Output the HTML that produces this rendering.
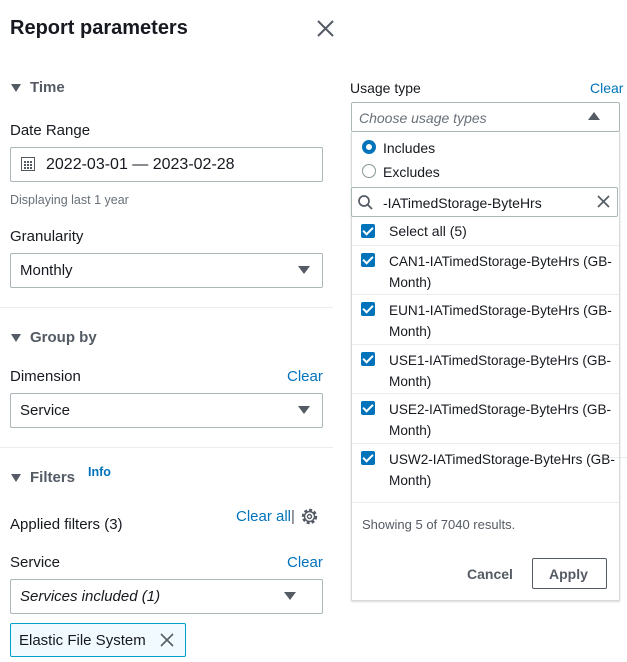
<!DOCTYPE html>
<html><head><meta charset="utf-8"><style>
*{box-sizing:border-box;margin:0;padding:0}
body{width:627px;height:662px;background:#fff;font-family:"Liberation Sans",Arial,sans-serif;color:#16191f;position:relative;overflow:hidden;font-size:15px}
.a{position:absolute;white-space:nowrap}
.h{font-weight:bold;color:#545b64;font-size:15px;padding-left:20px}
.h:before{content:"";position:absolute;left:1px;top:5px;border-left:5px solid transparent;border-right:5px solid transparent;border-top:8px solid #545b64}
.blue{color:#0073bb}
.box{position:absolute;border:1px solid #aab7b8;border-radius:2px;background:#fff}
.tri{position:absolute;width:0;height:0;border-left:6px solid transparent;border-right:6px solid transparent;border-top:8px solid #545b64}
.hr{position:absolute;height:1px;background:#eaeded}
.cb{position:absolute;width:14px;height:14px;background:#0073bb;border-radius:2px}
.cb:after{content:"";position:absolute;left:4px;top:1px;width:4px;height:8px;border:solid #fff;border-width:0 2px 2px 0;transform:rotate(45deg)}
.it{position:absolute;white-space:nowrap;font-size:13.6px;line-height:21px}
</style></head><body>
<div class="a" style="left:10px;top:17px;font-size:20px;font-weight:bold">Report parameters</div>
<svg class="a" style="left:317px;top:20px" width="17" height="17"><path d="M1 1L16 16M16 1L1 16" stroke="#545b64" stroke-width="2"/></svg>

<div class="a h" style="left:10px;top:79px">Time</div>
<div class="a" style="left:10px;top:122px">Date Range</div>
<div class="box" style="left:10px;top:147px;width:313px;height:35px"></div>
<svg class="a" style="left:21px;top:157px" width="14" height="14"><rect x="0.5" y="0.5" width="13" height="13" fill="none" stroke="#545b64"/><path d="M3 4h2v2H3zM6 4h2v2H6zM9 4h2v2H9zM3 7h2v2H3zM6 7h2v2H6zM9 7h2v2H9zM3 10h2v2H3zM6 10h2v2H6zM9 10h2v2H9z" fill="#545b64"/></svg>
<div class="a" style="left:46px;top:156px;font-size:16px">2022-03-01 — 2023-02-28</div>
<div class="a" style="left:10px;top:193px;font-size:12.5px;color:#687078">Displaying last 1 year</div>
<div class="a" style="left:10px;top:228px">Granularity</div>
<div class="box" style="left:10px;top:253px;width:313px;height:35px"></div>
<div class="a" style="left:20px;top:262px">Monthly</div>
<div class="tri" style="left:298px;top:266px"></div>
<div class="hr" style="left:0;top:307px;width:333px"></div>

<div class="a h" style="left:10px;top:329px">Group by</div>
<div class="a" style="left:10px;top:368px">Dimension</div>
<div class="a blue" style="left:287px;top:368px">Clear</div>
<div class="box" style="left:10px;top:393px;width:313px;height:35px"></div>
<div class="a" style="left:20px;top:402px">Service</div>
<div class="tri" style="left:298px;top:406px"></div>
<div class="hr" style="left:0;top:447px;width:333px"></div>
<div class="hr" style="left:600px;top:457px;width:27px"></div>

<div class="a h" style="left:10px;top:469px">Filters</div>
<div class="a blue" style="left:88px;top:465px;font-size:12.5px;font-weight:bold">Info</div>
<div class="a" style="left:10px;top:516px">Applied filters (3)</div>
<div class="a blue" style="left:236px;top:508px">Clear all<span style="color:#545b64">|</span></div>
<svg class="a" style="left:300px;top:507px" width="19" height="19" viewBox="0 0 19 19"><circle cx="9.5" cy="9.5" r="6.5" fill="none" stroke="#545b64" stroke-width="2.4" stroke-dasharray="3 2"/><circle cx="9.5" cy="9.5" r="5" fill="none" stroke="#545b64" stroke-width="1.4"/><circle cx="9.5" cy="9.5" r="2" fill="none" stroke="#545b64" stroke-width="1.4"/></svg>
<div class="a" style="left:10px;top:554px">Service</div>
<div class="a blue" style="left:287px;top:554px">Clear</div>
<div class="box" style="left:10px;top:579px;width:313px;height:35px"></div>
<div class="a" style="left:20px;top:588px;font-style:italic">Services included (1)</div>
<div class="tri" style="left:284px;top:592px"></div>
<div class="a" style="left:10px;top:623px;width:176px;height:34px;background:#f1faff;border:1px solid #00a1c9;border-radius:2px"></div>
<div class="a" style="left:19px;top:632px">Elastic File System</div>
<svg class="a" style="left:160px;top:633px" width="14" height="14"><path d="M1 1L13 13M13 1L1 13" stroke="#545b64" stroke-width="1.6"/></svg>

<!-- right -->
<div class="a" style="left:350px;top:80px;font-size:14px">Usage type</div>
<div class="a blue" style="left:590px;top:80px;font-size:14px">Clear</div>
<div class="box" style="left:351px;top:102px;width:269px;height:30px"></div>
<div class="a" style="left:359px;top:110px;font-size:14px;font-style:italic;color:#687078">Choose usage types</div>
<div class="a" style="left:588px;top:112px;width:0;height:0;border-left:6px solid transparent;border-right:6px solid transparent;border-bottom:8px solid #545b64"></div>
<div class="a" style="left:351px;top:131px;width:269px;height:470px;border:1px solid #d5dbdb;border-top:none;box-shadow:0 1px 2px rgba(0,0,0,.15)"></div>
<div class="a" style="left:362px;top:140px;width:14px;height:14px;border-radius:50%;border:4px solid #0073bb"></div>
<div class="a" style="left:383px;top:140px;font-size:14px">Includes</div>
<div class="a" style="left:362px;top:164px;width:14px;height:14px;border-radius:50%;border:1px solid #879596"></div>
<div class="a" style="left:383px;top:164px;font-size:14px">Excludes</div>
<div class="box" style="left:351px;top:187px;width:267px;height:30px"></div>
<svg class="a" style="left:358px;top:195px" width="15" height="15"><circle cx="6" cy="6" r="5" fill="none" stroke="#545b64" stroke-width="1.7"/><path d="M9.5 9.5L14 14" stroke="#545b64" stroke-width="1.8"/></svg>
<div class="a" style="left:383px;top:195px;font-size:14px">-IATimedStorage-ByteHrs</div>
<svg class="a" style="left:597px;top:195px" width="13" height="13"><path d="M1 1L12 12M12 1L1 12" stroke="#545b64" stroke-width="1.7"/></svg>
<div class="cb" style="left:361px;top:224px"></div>
<div class="a" style="left:389px;top:223px;font-size:14px">Select all (5)</div>
<div class="hr" style="left:352px;top:245px;width:267px"></div>

<div class="cb" style="left:361px;top:253px"></div>
<div class="it" style="left:389px;top:251px">CAN1-IATimedStorage-ByteHrs (GB-<br>Month)</div>
<div class="hr" style="left:352px;top:294px;width:267px"></div>
<div class="cb" style="left:361px;top:302px"></div>
<div class="it" style="left:389px;top:300px">EUN1-IATimedStorage-ByteHrs (GB-<br>Month)</div>
<div class="hr" style="left:352px;top:344px;width:267px"></div>
<div class="cb" style="left:361px;top:352px"></div>
<div class="it" style="left:389px;top:350px">USE1-IATimedStorage-ByteHrs (GB-<br>Month)</div>
<div class="hr" style="left:352px;top:393px;width:267px"></div>
<div class="cb" style="left:361px;top:401px"></div>
<div class="it" style="left:389px;top:399px">USE2-IATimedStorage-ByteHrs (GB-<br>Month)</div>
<div class="hr" style="left:352px;top:443px;width:267px"></div>
<div class="cb" style="left:361px;top:451px"></div>
<div class="it" style="left:389px;top:449px">USW2-IATimedStorage-ByteHrs (GB-<br>Month)</div>
<div class="hr" style="left:352px;top:502px;width:267px"></div>
<div class="a" style="left:362px;top:517px;font-size:13px;color:#545b64">Showing 5 of 7040 results.</div>
<div class="a" style="left:467px;top:566px;font-size:14px;font-weight:bold;color:#545b64">Cancel</div>
<div class="a" style="left:532px;top:558px;width:75px;height:31px;border:1px solid #545b64;border-radius:2px"></div>
<div class="a" style="left:549px;top:566px;font-size:14px;font-weight:bold;color:#545b64">Apply</div>
</body></html>
